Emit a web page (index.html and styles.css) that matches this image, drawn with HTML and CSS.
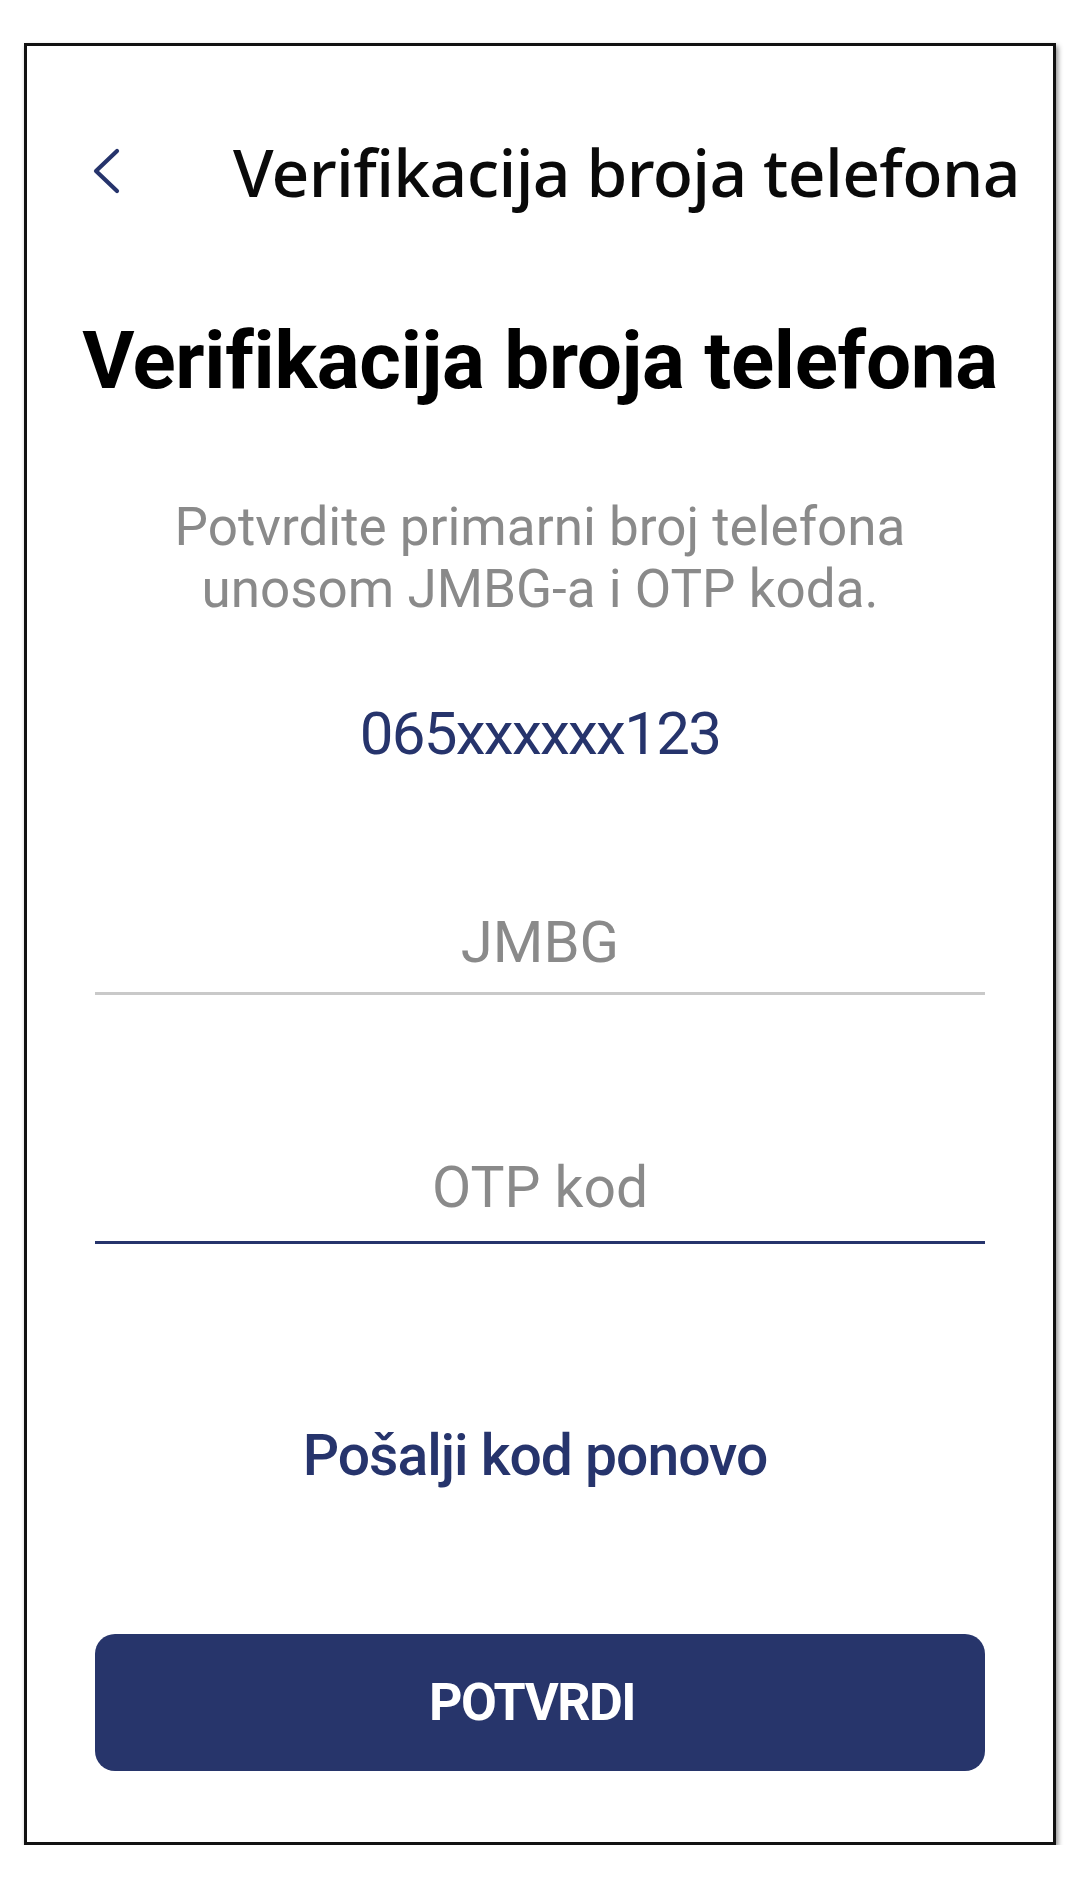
FILE: index.html
```html
<!DOCTYPE html>
<html lang="sr">
<head>
<meta charset="utf-8">
<title>Verifikacija broja telefona</title>
<link rel="stylesheet" href="styles.css">
</head>
<body>
<div class="frame">
  <header class="topbar">
    <button class="back" aria-label="Nazad">
      <svg class="back-icon" width="30" height="50" viewBox="0 0 30 50"><polyline points="24,5 3,25 24,45" fill="none" stroke="#26346c" stroke-width="4.2" stroke-linecap="round" stroke-linejoin="round"/></svg>
    </button>
    <span class="topbar-title">Verifikacija broja telefona</span>
  </header>
  <main class="content">
    <h1 class="heading">Verifikacija broja telefona</h1>
    <p class="subtitle">Potvrdite primarni broj telefona<br>unosom JMBG-a i OTP koda.</p>
    <div class="phone">065xxxxxx123</div>
    <div class="field"><span class="placeholder">JMBG</span></div>
    <div class="field field-active"><span class="placeholder">OTP kod</span></div>
    <a class="resend" href="#">Pošalji kod ponovo</a>
    <button class="confirm">POTVRDI</button>
  </main>
</div>
</body>
</html>
```
FILE: styles.css
```css
html, body { margin: 0; padding: 0; background: #ffffff; }
body { font-family: Roboto, "Liberation Sans", sans-serif; }

.frame {
  box-sizing: border-box;
  width: 1032px;
  height: 1802px;
  margin: 43px 0 0 24px;
  border: 3px solid #111111;
  box-shadow: 2px 3px 5px rgba(0,0,0,0.45);
  background: #ffffff;
  display: flex;
  flex-direction: column;
}

.topbar {
  display: flex;
  align-items: center;
  padding: 75px 0 0 66px;
  height: 100px;
}
.back {
  border: 0; background: none; padding: 0; margin: 0;
  width: 30px; height: 50px;
  display: block;
}
.back-icon { display: block; }
.topbar-title {
  margin-left: 110px;
  font-family: "Noto Sans", "Open Sans", sans-serif;
  font-weight: 500;
  font-size: 66px;
  letter-spacing: -0.65px;
  line-height: 100px;
  color: #0a0a0a;
  white-space: nowrap;
}

.content {
  display: flex;
  flex-direction: column;
  align-items: center;
  padding: 0 68px;
}

.heading {
  margin: 90px 0 0;
  font-family: Roboto, sans-serif;
  font-weight: 700;
  font-size: 80px;
  letter-spacing: -0.3px;
  line-height: 100px;
  color: #000000;
  white-space: nowrap;
}

.subtitle {
  margin: 85px 0 0;
  font-size: 53px;
  line-height: 62px;
  color: #8a8a8a;
  text-align: center;
}

.phone {
  margin-top: 74px;
  font-size: 60px;
  letter-spacing: -1.7px;
  line-height: 80px;
  color: #26346c;
}

.field {
  align-self: stretch;
  margin-top: 128px;
  padding-bottom: 10px;
  border-bottom: 3px solid #c9c9c9;
  text-align: center;
  font-size: 58px;
  line-height: 80px;
  color: #8a8a8a;
}
.field-active {
  margin-top: 153px;
  padding-bottom: 13px;
  font-size: 57px;
  border-bottom-color: #26346c;
}

.resend {
  margin-top: 172px;
  padding-right: 10px;
  font-size: 57px;
  font-weight: 500;
  letter-spacing: -1px;
  line-height: 80px;
  color: #26346c;
  text-decoration: none;
}

.confirm {
  align-self: stretch;
  margin-top: 138px;
  height: 137px;
  padding: 0 16px 0 0;
  border: 0;
  border-radius: 20px;
  background: #27356b;
  color: #ffffff;
  font-family: Roboto, sans-serif;
  font-weight: 700;
  font-size: 52px;
  letter-spacing: -1.5px;
  display: flex;
  align-items: center;
  justify-content: center;
}
```
